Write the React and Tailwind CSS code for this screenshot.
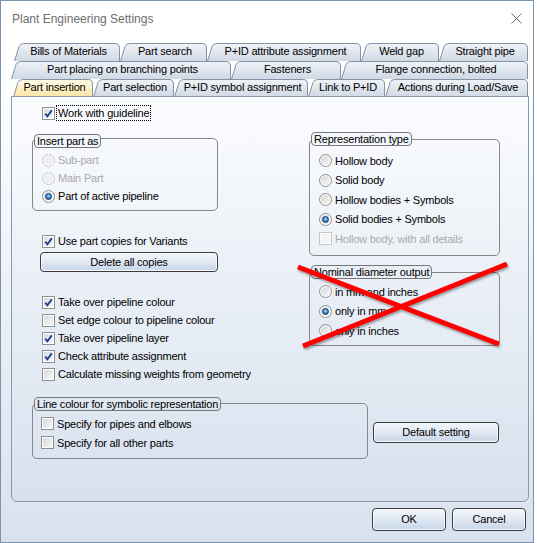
import React from "react";

const tabRows = [
  {
    offset: "ml-[13px]",
    tabs: [
      ["Bills of Materials", 106],
      ["Part search", 87],
      ["P+ID attribute assignment", 154],
      ["Weld gap", 78],
      ["Straight pipe", 89],
    ],
  },
  {
    offset: "ml-[10px]",
    tabs: [
      ["Part placing on branching points", 220],
      ["Fasteners", 110],
      ["Flange connection, bolted", 187],
    ],
  },
  {
    offset: "ml-[12px]",
    tabs: [
      ["Part insertion", 80, true],
      ["Part selection", 81],
      ["P+ID symbol assignment", 134],
      ["Link to P+ID", 77],
      ["Actions during Load/Save", 143],
    ],
  },
];

function Tab({ label, width, selected }) {
  const h = 18;
  const edge = `M0.5 ${h} L5 3.5 Q6.2 0.5 9.5 0.5 L${width - 5} 0.5 Q${width - 0.5} 0.5 ${width - 0.5} 5 L${width - 0.5} ${h}`;
  return (
    <div className="relative h-[18px] shrink-0" style={{ width }}>
      <svg className="absolute inset-0" width={width} height={h}>
        <path d={edge + " Z"} fill={selected ? "url(#tabSel)" : "url(#tabFill)"} />
        <path d={edge} fill="none" stroke="#8792a2" strokeWidth="1" />
      </svg>
      <div className="relative flex h-full items-center justify-center pl-[3px] pb-px whitespace-nowrap">
        {label}
      </div>
    </div>
  );
}

function CheckBox({ checked, disabled }) {
  return (
    <div
      className={`w-[13px] h-[13px] shrink-0 border shadow-[inset_0_0_0_1px_#ffffff] flex items-center justify-center ${
        disabled
          ? "border-[#c4c6c9] bg-[#f3f4f5]"
          : "border-[#8e8f8f] bg-gradient-to-br from-[#d3d6da] to-[#fafafa]"
      }`}
    >
      {checked && (
        <svg width="11" height="11" viewBox="0 0 11 11">
          <path d="M2.3 5.6 L4.4 8.2 L8.8 2.4" fill="none" stroke="#1f3c8c" strokeWidth="1.8" />
        </svg>
      )}
    </div>
  );
}

function Radio({ checked, disabled }) {
  return (
    <div
      className={`w-[13px] h-[13px] shrink-0 rounded-full border shadow-[inset_0_0_0_1px_#ffffff] flex items-center justify-center ${
        disabled
          ? "border-[#c9cbce] bg-[#eeeff1]"
          : "border-[#8e8f8f] bg-gradient-to-br from-[#cfd2d6] to-[#fbfbfb]"
      }`}
    >
      {checked && (
        <div className="w-[7px] h-[7px] rounded-full border border-[#1a3d66] bg-[radial-gradient(circle_at_50%_40%,#b5e2ff_0%,#4a9ae0_40%,#1d5a9c_80%)]" />
      )}
    </div>
  );
}

function CheckRow({ label, checked, disabled, focus, h = "h-[18px]" }) {
  return (
    <div className={`flex items-center ${h} gap-[3px]`}>
      <CheckBox checked={checked} disabled={disabled} />
      <span
        className={`whitespace-nowrap leading-[14px] ${disabled ? "text-[#a9a9a9]" : ""} ${
          focus ? "border border-dotted border-black px-px -ml-[2px]" : ""
        }`}
      >
        {label}
      </span>
    </div>
  );
}

function RadioRow({ label, checked, disabled, h = "h-[18px]" }) {
  return (
    <div className={`flex items-center ${h} gap-[3px]`}>
      <Radio checked={checked} disabled={disabled} />
      <span className={`whitespace-nowrap ${disabled ? "text-[#a9a9a9]" : ""}`}>{label}</span>
    </div>
  );
}

function GroupBox({ title, legendBg, legendTop, className, children }) {
  return (
    <div className={`relative border border-[#878787] rounded-[5px] ${className}`}>
      <div
        className={`absolute left-[1px] px-[2px] h-[14px] leading-[12px] border border-[#777777] rounded-[4px] whitespace-nowrap ${legendBg} ${legendTop}`}
      >
        {title}
      </div>
      {children}
    </div>
  );
}

function Button({ children, className }) {
  return (
    <div
      className={`flex items-center justify-center rounded-[4px] border border-[#3a3a3a] bg-gradient-to-b from-[#f4f7fb] via-[#e0e8f3] to-[#c6d5e8] shadow-[inset_0_0_0_1px_#f7faff] ${className}`}
    >
      {children}
    </div>
  );
}

export default function App() {
  return (
    <div className="w-[537px] h-[543px] bg-white">
      <svg width="0" height="0" className="absolute">
        <defs>
          <linearGradient id="tabFill" x1="0" y1="0" x2="0" y2="1">
            <stop offset="0" stopColor="#f0f3f8" />
            <stop offset="1" stopColor="#d0d9e5" />
          </linearGradient>
          <linearGradient id="tabSel" x1="0" y1="0" x2="0" y2="1">
            <stop offset="0" stopColor="#fffbea" />
            <stop offset="1" stopColor="#fbe5a4" />
          </linearGradient>
        </defs>
      </svg>
      <div className="relative w-[534px] h-[543px] border border-[#7a93b3] bg-gradient-to-b from-white from-[12%] to-[#d8e2ee] flex flex-col text-[11px] tracking-[-0.2px] text-black font-['Liberation_Sans',Arial,sans-serif]">
        {/* title bar */}
        <div className="h-[35px] shrink-0 flex items-center justify-between pl-[11px] pr-[11px]">
          <span className="text-[12px] tracking-normal text-[#6e6e6e]">Plant Engineering Settings</span>
          <svg width="11" height="11" viewBox="0 0 11 11">
            <path d="M0.5 0.5 L10.5 10.5 M10.5 0.5 L0.5 10.5" stroke="#707070" strokeWidth="1" />
          </svg>
        </div>

        {/* tabs */}
        <div className="mt-[7px] flex flex-col">
          {tabRows.map((row, i) => (
            <div key={i} className={`flex h-[18px] ${row.offset}`}>
              {row.tabs.map(([label, width, selected]) => (
                <Tab key={label} label={label} width={width} selected={selected} />
              ))}
            </div>
          ))}
        </div>

        {/* page */}
        <div className="relative -mt-px ml-[10px] w-[518px] h-[406px] shrink-0 border border-[#8c98a8] rounded-b-[6px] bg-gradient-to-b from-[#fbfcfe] to-[#d7e1ee] flex flex-col">
          <div className="flex items-start">
            <div className="ml-[20px] w-[277px] shrink-0 flex flex-col">
              <div className="mt-[7px] pl-[10px]">
                <CheckRow label="Work with guideline" checked focus />
              </div>
              <GroupBox
                title="Insert part as"
                legendBg="bg-[#f3f6fa]"
                legendTop="top-[-5px]"
                className="mt-[16px] w-[186px] h-[73px] pt-[12px] pl-[9px]"
              >
                <RadioRow label="Sub-part" disabled />
                <RadioRow label="Main Part" disabled />
                <RadioRow label="Part of active pipeline" checked />
              </GroupBox>
              <div className="mt-[21px] pl-[10px]">
                <CheckRow label="Use part copies for Variants" checked />
              </div>
              <Button className="mt-[2px] ml-[8px] w-[178px] h-[20px]">Delete all copies</Button>
              <div className="mt-[21px] pl-[10px] flex flex-col">
                <CheckRow label="Take over pipeline colour" checked />
                <CheckRow label="Set edge colour to pipeline colour" />
                <CheckRow label="Take over pipeline layer" checked />
                <CheckRow label="Check attribute assignment" checked />
                <CheckRow label="Calculate missing weights from geometry" />
              </div>
            </div>

            <div className="mt-[42px] w-[191px] shrink-0 flex flex-col">
              <GroupBox
                title="Representation type"
                legendBg="bg-[#f3f6fa]"
                legendTop="top-[-8px]"
                className="h-[117px] pt-[11px] pl-[9px]"
              >
                <RadioRow label="Hollow body" h="h-[19.5px]" />
                <RadioRow label="Solid body" h="h-[19.5px]" />
                <RadioRow label="Hollow bodies + Symbols" h="h-[19.5px]" />
                <RadioRow label="Solid bodies + Symbols" checked h="h-[19.5px]" />
                <CheckRow label="Hollow body, with all details" disabled h="h-[19.5px]" />
              </GroupBox>
              <GroupBox
                title="Nominal diameter output"
                legendBg="bg-[#e9eff6]"
                legendTop="top-[-8px]"
                className="mt-[16px] h-[74px] pt-[9px] pl-[9px]"
              >
                <RadioRow label="in mm and inches" h="h-[19.5px]" />
                <RadioRow label="only in mm" checked h="h-[19.5px]" />
                <RadioRow label="only in inches" h="h-[19.5px]" />
              </GroupBox>
            </div>
          </div>

          <div className="mt-[20px] ml-[20px] flex items-start">
            <GroupBox
              title="Line colour for symbolic representation"
              legendBg="bg-[#dfe7f1]"
              legendTop="top-[-7px]"
              className="w-[336px] h-[56px] pt-[10px] pl-[8px] shrink-0"
            >
              <CheckRow label="Specify for pipes and elbows" h="h-[19px]" />
              <CheckRow label="Specify for all other parts" h="h-[19px]" />
            </GroupBox>
            <Button className="ml-[5px] mt-[19px] w-[126px] h-[21px]">Default setting</Button>
          </div>
        </div>

        {/* dialog buttons */}
        <div className="mt-[6px] flex justify-end gap-[6px] pr-[7px]">
          <Button className="w-[74px] h-[23px]">OK</Button>
          <Button className="w-[74px] h-[23px]">Cancel</Button>
        </div>

        {/* red cross drawn over the nominal diameter group */}
        <svg
          className="absolute left-0 top-0 pointer-events-none drop-shadow-[1px_2px_1px_rgba(0,0,0,0.35)]"
          width="534"
          height="543"
        >
          <line x1="297" y1="266" x2="498" y2="343" stroke="#ff0000" strokeWidth="5" />
          <line x1="302" y1="345" x2="506" y2="263" stroke="#ff0000" strokeWidth="5" />
        </svg>
      </div>
    </div>
  );
}
